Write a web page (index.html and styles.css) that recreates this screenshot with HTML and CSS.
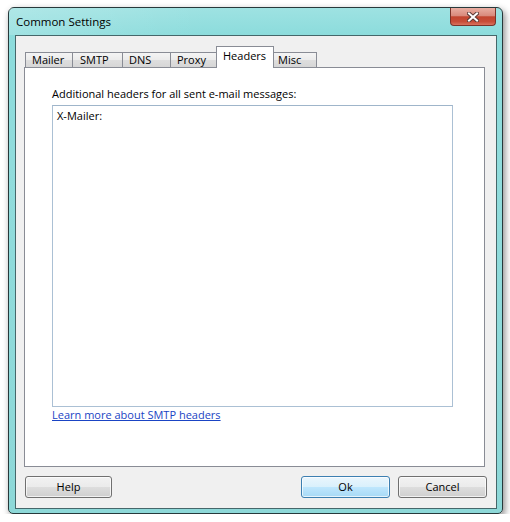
FILE: index.html
```html
<!DOCTYPE html>
<html lang="en">
  <head>
    <meta charset="utf-8">
    <title>Common Settings</title>
    <link rel="stylesheet" href="styles.css">
  </head>
  <body>
    <div class="window">
      <div class="titlebar">
        <span class="caption">Common Settings</span>
        <div class="close-btn">
          <svg width="12" height="10" viewBox="0 0 12 10">
            <path d="M2 1.5 L10 8.5 M10 1.5 L2 8.5" stroke="#5a3a36" stroke-width="4" stroke-linecap="square"/>
            <path d="M2 1.5 L10 8.5 M10 1.5 L2 8.5" stroke="#ffffff" stroke-width="2" stroke-linecap="square"/>
          </svg>
        </div>
      </div>
      <div class="client">
        <div class="tabs">
          <div class="tab">Mailer</div>
          <div class="tab">SMTP</div>
          <div class="tab">DNS</div>
          <div class="tab">Proxy</div>
          <div class="tab active">Headers</div>
          <div class="tab">Misc</div>
        </div>
        <div class="panel">
          <div class="field-label">Additional headers for all sent e-mail messages:</div>
          <div class="textbox">X-Mailer:</div>
          <a class="link" href="#">Learn more about SMTP headers</a>
        </div>
        <div class="buttons">
          <div class="btn">Help</div>
          <div class="spacer"></div>
          <div class="btn default">Ok</div>
          <div class="btn">Cancel</div>
        </div>
      </div>
    </div>
  </body>
</html>
```

FILE: styles.css
```css
body { margin: 0; background: #ffffff; font-family: "Open Sans", "Noto Sans", sans-serif; font-size: 11px; color: #000; }

.window { box-sizing: border-box; width: 495px; height: 507px; margin: 7px 0 0 8px; display: flex; flex-direction: column;
  border: 1px solid #27393b; border-radius: 6px 6px 5px 5px;
  background: linear-gradient(to bottom, #9ee2e2 0, #8cdcdc 27px, #90dcdc 150px, #8dd8d8 100%);
  box-shadow: 2px 3px 7px rgba(0, 0, 0, 0.45); }

.titlebar { height: 27px; display: flex; justify-content: space-between; align-items: flex-start; padding: 0 6px 0 7px;
  background: linear-gradient(to right, rgba(255, 255, 255, 0.18), rgba(255, 255, 255, 0) 40%); }
.caption { line-height: 27px; font-size: 11.5px; color: #000; }

.close-btn { box-sizing: border-box; width: 46px; height: 18px; display: flex; align-items: center; justify-content: center;
  border: 1px solid #7b3329; border-top: none; border-radius: 0 0 4px 4px;
  background: linear-gradient(to bottom, #e9aea2 0, #d98a7c 45%, #c2452f 52%, #c84d38 80%, #d9735e 100%); }

.client { flex: 1; margin: 0 5px 4px 6px; border: 1px solid #45676a; background: #f0f0f0; display: flex; flex-direction: column; }

.tabs { display: flex; align-items: flex-end; height: 21px; margin: 10px 0 0 9px; }
.tab { box-sizing: border-box; height: 15px; line-height: 13px; padding-left: 6px; margin-left: -1px; white-space: nowrap; overflow: hidden;
  border: 1px solid #898c95; border-bottom: none;
  background: linear-gradient(to bottom, #f4f4f4 0, #ebebeb 50%, #dedede 51%, #d6d6d6 100%); }
.tab:nth-child(1) { width: 48px; margin-left: 0; }
.tab:nth-child(2) { width: 51px; padding-left: 7px; }
.tab:nth-child(3) { width: 49px; }
.tab:nth-child(4) { width: 47px; }
.tab:nth-child(5) { width: 58px; }
.tab:nth-child(6) { width: 45px; padding-left: 5px; }
.tab.active { height: 22px; line-height: 18px; margin-bottom: -1px; margin-right: -1px; position: relative; z-index: 1; background: #ffffff; }

.panel { box-sizing: border-box; height: 400px; margin: 0 0 0 8px; width: 461px; padding: 18px 0 0 27px;
  border: 1px solid #898c95; background: #ffffff; display: flex; flex-direction: column; align-items: flex-start; }
.field-label { line-height: 16px; }
.textbox { box-sizing: border-box; width: 401px; height: 302px; margin-top: 3px; padding: 2px 4px; line-height: 16px;
  border: 1px solid #abc0d4; border-top-color: #9fb5ca; }
.link { line-height: 16px; color: #1a44c4; text-decoration: underline; }

.buttons { display: flex; gap: 8px; margin: 9px 9px 0 9px; }
.spacer { flex: 1; }
.btn { box-sizing: border-box; width: 89px; height: 22px; line-height: 19px; text-align: center; border: 1px solid #707070; border-radius: 3px;
  background: linear-gradient(to bottom, #f2f2f2 0, #ebebeb 50%, #dddddd 51%, #cfcfcf 100%); box-shadow: inset 0 0 0 1px rgba(255, 255, 255, 0.7); }
.btn:first-child { width: 87px; }
.btn.default { border-color: #3c7fb1;
  background: linear-gradient(to bottom, #eaf6fd 0, #d9f0fc 50%, #bee6fd 51%, #a7d9f5 100%); }
```
